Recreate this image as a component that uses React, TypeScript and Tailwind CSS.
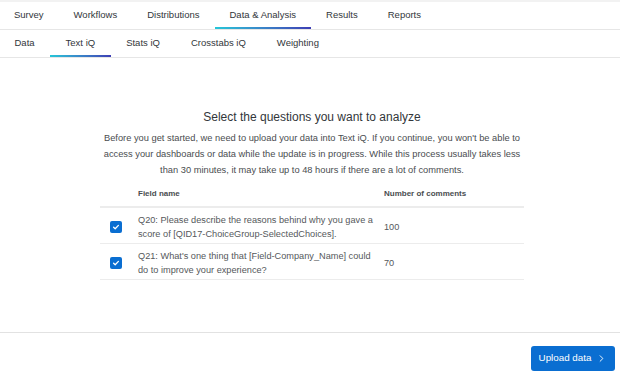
import { ChevronRight } from "lucide-react";

const mainTabs = ["Survey", "Workflows", "Distributions", "Data & Analysis", "Results", "Reports"];
const subTabs = ["Data", "Text iQ", "Stats iQ", "Crosstabs iQ", "Weighting"];

const rows = [
  {
    text: "Q20: Please describe the reasons behind why you gave a score of [QID17-ChoiceGroup-SelectedChoices].",
    count: 100,
  },
  {
    text: "Q21: What's one thing that [Field-Company_Name] could do to improve your experience?",
    count: 70,
  },
];

function TabBar({ tabs, active, pad }: { tabs: string[]; active: string; pad: string }) {
  return (
    <div className="flex h-[28px] border-b border-[#e6e6e6] pl-0">
      <div className="ml-[-1px] flex">
        {tabs.map((t) => (
          <div key={t} className={`relative flex items-center text-[9.5px] text-[#32363a] ${pad}`}>
            {t}
            {t === active && (
              <span className="absolute left-0 right-0 bottom-0 h-[2px] bg-gradient-to-r from-[#24c6d8] to-[#3d3db4]" />
            )}
          </div>
        ))}
      </div>
    </div>
  );
}

function Check() {
  return (
    <span className="flex h-[12px] w-[12px] items-center justify-center rounded-[2px] bg-[#0a6ed1]">
      <svg width="8" height="8" viewBox="0 0 8 8" fill="none">
        <path d="M1.6 4.2 3.2 5.7 6.4 2.4" stroke="white" strokeWidth="1.3" strokeLinecap="round" strokeLinejoin="round" />
      </svg>
    </span>
  );
}

export default function App() {
  return (
    <div
      className="flex h-[373px] w-[620px] flex-col bg-white"
      style={{ fontFamily: '"Liberation Sans", Arial, sans-serif' }}
    >
      <div className="h-[2px] bg-[#f2f2f2]" />
      <TabBar tabs={mainTabs} active="Data & Analysis" pad="px-[15px]" />
      <TabBar tabs={subTabs} active="Text iQ" pad="px-[15.5px]" />

      <div className="flex-1">
        <div className="mx-auto w-[428px] pl-[4px] pt-[51px]">
          <h1 className="text-center text-[12px] leading-[16px] text-[#32363a]">
            Select the questions you want to analyze
          </h1>
          <p className="mt-[5px] text-center text-[9.3px] leading-[16px] text-[#4a4d50]">
            Before you get started, we need to upload your data into Text iQ. If you continue, you won't be able to
            access your dashboards or data while the update is in progress. While this process usually takes less
            than 30 minutes, it may take up to 48 hours if there are a lot of comments.
          </p>

          <div className="mt-[3px]">
            <div className="grid h-[27px] grid-cols-[38px_246px_1fr] items-center border-b-2 border-[#ececec] text-[8px] font-bold text-[#4a4d50]">
              <span />
              <span>Field name</span>
              <span>Number of comments</span>
            </div>
            {rows.map((r) => (
              <div
                key={r.count}
                className="grid h-[36px] grid-cols-[38px_246px_1fr] items-center border-b border-[#ececec] pt-[2px] text-[9.2px] leading-[14px] text-[#55585b]"
              >
                <span className="pl-[10px]">
                  <Check />
                </span>
                <span className="pr-[8px]">{r.text}</span>
                <span>{r.count}</span>
              </div>
            ))}
          </div>
        </div>
      </div>

      <div className="flex h-[41px] justify-end border-t border-[#e2e2e2] pr-[5px] pt-[13px]">
        <button className="flex h-[25px] w-[84px] items-center justify-center gap-[5px] rounded-[3px] bg-[#0a6ed1] text-[9.8px] text-white">
          Upload data
          <ChevronRight size={11} strokeWidth={2} />
        </button>
      </div>
    </div>
  );
}
